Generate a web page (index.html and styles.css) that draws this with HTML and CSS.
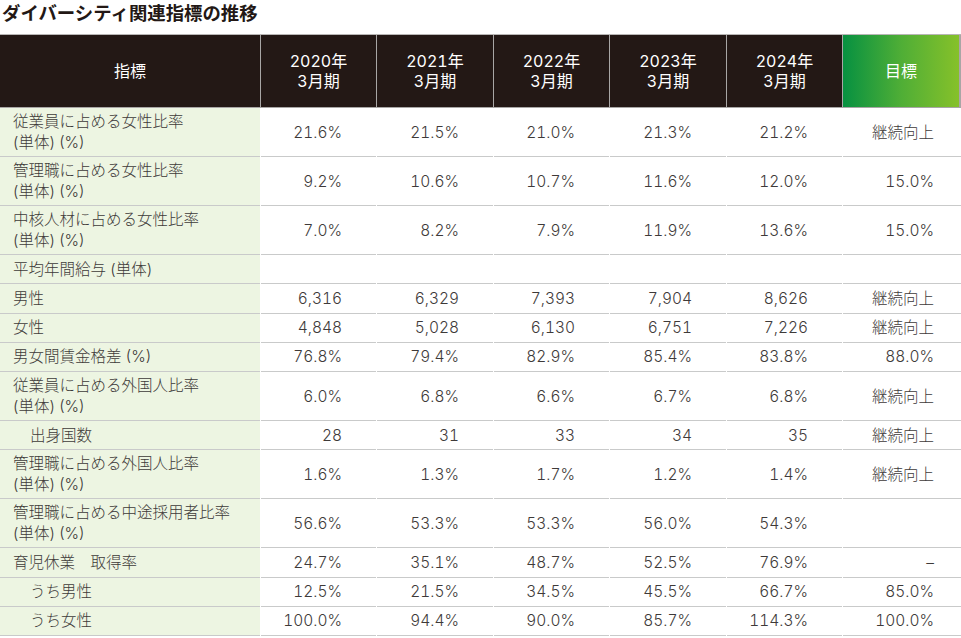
FILE: index.html
```html
<!DOCTYPE html>
<html lang="ja">
<head>
<meta charset="utf-8">
<title>ダイバーシティ関連指標の推移</title>
<link rel="stylesheet" href="styles.css">
</head>
<body>
<h1 class="title">ダイバーシティ関連指標の推移</h1>
<div class="table">
  <div class="row head">
    <div class="hc">指標</div>
    <div class="hc">2020年<br>3月期</div>
    <div class="hc">2021年<br>3月期</div>
    <div class="hc">2022年<br>3月期</div>
    <div class="hc">2023年<br>3月期</div>
    <div class="hc">2024年<br>3月期</div>
    <div class="hc goal">目標</div>
  </div>
  <div class="row tall">
    <div class="lbl">従業員に占める女性比率<br>(単体) (%)</div>
    <div class="num">21.6%</div><div class="num">21.5%</div><div class="num">21.0%</div><div class="num">21.3%</div><div class="num">21.2%</div><div class="num g">継続向上</div>
  </div>
  <div class="row tall">
    <div class="lbl">管理職に占める女性比率<br>(単体) (%)</div>
    <div class="num">9.2%</div><div class="num">10.6%</div><div class="num">10.7%</div><div class="num">11.6%</div><div class="num">12.0%</div><div class="num g">15.0%</div>
  </div>
  <div class="row tall">
    <div class="lbl">中核人材に占める女性比率<br>(単体) (%)</div>
    <div class="num">7.0%</div><div class="num">8.2%</div><div class="num">7.9%</div><div class="num">11.9%</div><div class="num">13.6%</div><div class="num g">15.0%</div>
  </div>
  <div class="row">
    <div class="lbl">平均年間給与 (単体)</div>
    <div class="num"></div><div class="num"></div><div class="num"></div><div class="num"></div><div class="num"></div><div class="num g"></div>
  </div>
  <div class="row">
    <div class="lbl">男性</div>
    <div class="num">6,316</div><div class="num">6,329</div><div class="num">7,393</div><div class="num">7,904</div><div class="num">8,626</div><div class="num g">継続向上</div>
  </div>
  <div class="row">
    <div class="lbl">女性</div>
    <div class="num">4,848</div><div class="num">5,028</div><div class="num">6,130</div><div class="num">6,751</div><div class="num">7,226</div><div class="num g">継続向上</div>
  </div>
  <div class="row">
    <div class="lbl">男女間賃金格差 (%)</div>
    <div class="num">76.8%</div><div class="num">79.4%</div><div class="num">82.9%</div><div class="num">85.4%</div><div class="num">83.8%</div><div class="num g">88.0%</div>
  </div>
  <div class="row tall">
    <div class="lbl">従業員に占める外国人比率<br>(単体) (%)</div>
    <div class="num">6.0%</div><div class="num">6.8%</div><div class="num">6.6%</div><div class="num">6.7%</div><div class="num">6.8%</div><div class="num g">継続向上</div>
  </div>
  <div class="row">
    <div class="lbl sub">出身国数</div>
    <div class="num">28</div><div class="num">31</div><div class="num">33</div><div class="num">34</div><div class="num">35</div><div class="num g">継続向上</div>
  </div>
  <div class="row tall">
    <div class="lbl">管理職に占める外国人比率<br>(単体) (%)</div>
    <div class="num">1.6%</div><div class="num">1.3%</div><div class="num">1.7%</div><div class="num">1.2%</div><div class="num">1.4%</div><div class="num g">継続向上</div>
  </div>
  <div class="row tall">
    <div class="lbl">管理職に占める中途採用者比率<br>(単体) (%)</div>
    <div class="num">56.6%</div><div class="num">53.3%</div><div class="num">53.3%</div><div class="num">56.0%</div><div class="num">54.3%</div><div class="num g"></div>
  </div>
  <div class="row">
    <div class="lbl">育児休業　取得率</div>
    <div class="num">24.7%</div><div class="num">35.1%</div><div class="num">48.7%</div><div class="num">52.5%</div><div class="num">76.9%</div><div class="num g">–</div>
  </div>
  <div class="row">
    <div class="lbl sub">うち男性</div>
    <div class="num">12.5%</div><div class="num">21.5%</div><div class="num">34.5%</div><div class="num">45.5%</div><div class="num">66.7%</div><div class="num g">85.0%</div>
  </div>
  <div class="row">
    <div class="lbl sub">うち女性</div>
    <div class="num">100.0%</div><div class="num">94.4%</div><div class="num">90.0%</div><div class="num">85.7%</div><div class="num">114.3%</div><div class="num g">100.0%</div>
  </div>
</div>
</body>
</html>
```
FILE: styles.css
```css
html, body {
  margin: 0;
  padding: 0;
  background: #ffffff;
}
body {
  width: 961px;
  font-family: Inter, "Noto Sans CJK JP", sans-serif;
  color: #3e3a39;
}
.title {
  margin: 0;
  padding: 1px 0 0 2px;
  height: 34px;
  box-sizing: border-box;
  font-family: "Noto Sans CJK JP", sans-serif;
  font-size: 18.4px;
  line-height: 22px;
  font-weight: 700;
  color: #231815;
}
.table {
  display: flex;
  flex-direction: column;
}
.row {
  display: grid;
  grid-template-columns: 260px 115px 116px 115px 116px 115px 118px;
  column-gap: 1px;
  height: 29.25px;
}
.row.tall {
  height: 49px;
}
.row.head {
  height: 74px;
  background: #a8a6a5;
  border-top: 1px solid #b8b6b5;
  padding-bottom: 1px;
  box-sizing: border-box;
}
.hc {
  background: #231815;
  color: #ffffff;
  font-size: 16px;
  line-height: 20px;
  font-weight: 400;
  font-feature-settings: "tnum" 1;
  display: flex;
  align-items: center;
  justify-content: center;
  text-align: center;
}
.hc.goal {
  background: linear-gradient(90deg, #079141 0%, #4fae36 50%, #86c12a 100%);
  margin-right: 2px;
}
.lbl, .num {
  border-bottom: 1px solid #c9caca;
  box-sizing: border-box;
  display: flex;
  align-items: center;
  font-size: 15.5px;
  line-height: 21px;
  font-weight: 300;
}
.lbl {
  background: #edf5e2;
  padding-left: 13px;
  white-space: nowrap;
}
.lbl.sub {
  padding-left: 30px;
}
.num {
  justify-content: flex-end;
  padding-right: 34px;
  background: #ffffff;
  font-feature-settings: "tnum" 1;
}
.num.g {
  padding-right: 27px;
}
```
